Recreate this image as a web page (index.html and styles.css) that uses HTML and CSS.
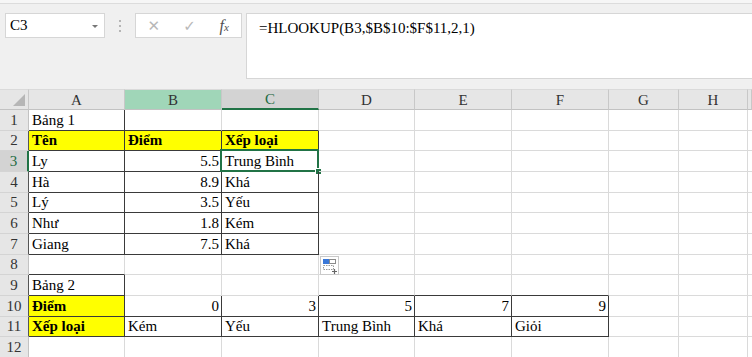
FILE: index.html
```html
<!DOCTYPE html>
<html lang="vi">
<head>
    <meta charset="UTF-8">
    <title>Bảng tính - HLOOKUP</title>
    <link rel="stylesheet" href="styles.css">
</head>
<body>
    <div class="top-strip"></div>

    <div class="formula-bar">
        <div class="name-box">
            <span>C3</span>
            <span class="drop"></span>
        </div>
        <div class="grip"><i></i><i></i><i></i></div>
        <div class="func-box">
            <span class="fx-btn cancel">✕</span>
            <span class="fx-btn ok">✓</span>
            <span class="fx-btn fx"><em>f</em><small>x</small></span>
        </div>
        <div class="formula">=HLOOKUP(B3,$B$10:$F$11,2,1)</div>
    </div>

    <div class="sheet">
        <!-- column headers -->
        <div class="hd corner"><span class="tri"></span></div>
        <div class="hd">A</div>
        <div class="hd col-b">B</div>
        <div class="hd col-sel">C</div>
        <div class="hd">D</div>
        <div class="hd">E</div>
        <div class="hd">F</div>
        <div class="hd">G</div>
        <div class="hd">H</div>
        <div class="hd"></div>

        <!-- 1 -->
        <div class="rh">1</div>
        <div class="c br bb">Bảng 1</div>
        <div class="c bb"></div>
        <div class="c bb"></div>
        <div class="c"></div><div class="c"></div><div class="c"></div><div class="c"></div><div class="c"></div><div class="c pad"></div>

        <!-- 2 -->
        <div class="rh dk">2</div>
        <div class="c br bb hl b">Tên</div>
        <div class="c br bb hl b">Điểm</div>
        <div class="c br bb hl b">Xếp loại</div>
        <div class="c"></div><div class="c"></div><div class="c"></div><div class="c"></div><div class="c"></div><div class="c pad"></div>

        <!-- 3 -->
        <div class="rh row-sel">3</div>
        <div class="c br bb">Ly</div>
        <div class="c br bb num">5.5</div>
        <div class="c br bb active">Trung Bình<span class="sel"><span class="handle"></span></span></div>
        <div class="c"></div><div class="c"></div><div class="c"></div><div class="c"></div><div class="c"></div><div class="c pad"></div>

        <!-- 4 -->
        <div class="rh dk">4</div>
        <div class="c br bb">Hà</div>
        <div class="c br bb num">8.9</div>
        <div class="c br bb">Khá</div>
        <div class="c"></div><div class="c"></div><div class="c"></div><div class="c"></div><div class="c"></div><div class="c pad"></div>

        <!-- 5 -->
        <div class="rh dk">5</div>
        <div class="c br bb">Lý</div>
        <div class="c br bb num">3.5</div>
        <div class="c br bb">Yếu</div>
        <div class="c"></div><div class="c"></div><div class="c"></div><div class="c"></div><div class="c"></div><div class="c pad"></div>

        <!-- 6 -->
        <div class="rh dk">6</div>
        <div class="c br bb">Như</div>
        <div class="c br bb num">1.8</div>
        <div class="c br bb">Kém</div>
        <div class="c"></div><div class="c"></div><div class="c"></div><div class="c"></div><div class="c"></div><div class="c pad"></div>

        <!-- 7 -->
        <div class="rh dk">7</div>
        <div class="c br bb">Giang</div>
        <div class="c br bb num">7.5</div>
        <div class="c br bb">Khá</div>
        <div class="c"></div><div class="c"></div><div class="c"></div><div class="c"></div><div class="c"></div><div class="c pad"></div>

        <!-- 8 -->
        <div class="rh">8</div>
        <div class="c bb"></div>
        <div class="c"></div>
        <div class="c"></div>
        <div class="c">
            <span class="paste-opt">
                <svg width="17" height="17" viewBox="0 0 17 17">
                    <rect x="2.5" y="2.5" width="6" height="4" fill="#3a78d8" stroke="#3a78d8"/>
                    <rect x="8.5" y="2.5" width="6" height="4" fill="#fff" stroke="#8a8a8a"/>
                    <rect x="2.5" y="8.5" width="10" height="4" fill="none" stroke="#9a9a9a" stroke-dasharray="1.5 1"/>
                    <path d="M11 14.5h5M13.5 12v5" stroke="#666" stroke-width="1.2"/>
                </svg>
            </span>
        </div>
        <div class="c"></div><div class="c"></div><div class="c"></div><div class="c"></div><div class="c pad"></div>

        <!-- 9 -->
        <div class="rh dk">9</div>
        <div class="c br bb">Bảng 2</div>
        <div class="c"></div>
        <div class="c"></div>
        <div class="c bb"></div>
        <div class="c bb"></div>
        <div class="c bb"></div>
        <div class="c"></div><div class="c"></div><div class="c pad"></div>

        <!-- 10 -->
        <div class="rh dk">10</div>
        <div class="c br bb hl b">Điểm</div>
        <div class="c br bb num">0</div>
        <div class="c br bb num">3</div>
        <div class="c br bb num">5</div>
        <div class="c br bb num">7</div>
        <div class="c br bb num">9</div>
        <div class="c"></div><div class="c"></div><div class="c pad"></div>

        <!-- 11 -->
        <div class="rh dk">11</div>
        <div class="c br bb hl b">Xếp loại</div>
        <div class="c br bb">Kém</div>
        <div class="c br bb">Yếu</div>
        <div class="c br bb">Trung Bình</div>
        <div class="c br bb">Khá</div>
        <div class="c br bb">Giỏi</div>
        <div class="c"></div><div class="c"></div><div class="c pad"></div>

        <!-- 12 -->
        <div class="rh">12</div>
        <div class="c"></div><div class="c"></div><div class="c"></div><div class="c"></div><div class="c"></div><div class="c"></div><div class="c"></div><div class="c"></div><div class="c pad"></div>
    </div>
</body>
</html>
```

FILE: styles.css
```css
html, body {
    margin: 0;
    overflow: hidden;
}
body {
    font-family: 'Liberation Serif', 'Times New Roman', serif;
    font-size: 15px;
    color: #000;
    background: #f0f0f0;
    width: 752px;
    height: 357px;
}

/* formula bar */
.top-strip {
    height: 3px;
    background: #f6f6f6;
    border-bottom: 1px solid #dcdcdc;
}
.formula-bar {
    display: flex;
    align-items: flex-start;
    height: 85px;
    padding: 9px 0 0 5px;
    box-sizing: border-box;
    background: #f0f0f0;
}
.name-box {
    width: 100px;
    height: 25px;
    box-sizing: border-box;
    background: #fff;
    border: 1px solid #d6d6d6;
    display: flex;
    align-items: center;
    justify-content: space-between;
    padding: 0 6px 0 4px;
}
.drop {
    width: 0;
    height: 0;
    border-left: 3px solid transparent;
    border-right: 3px solid transparent;
    border-top: 3px solid #777;
    margin-top: 2px;
}
.grip {
    width: 30px;
    height: 25px;
    display: flex;
    flex-direction: column;
    align-items: center;
    justify-content: center;
    gap: 3px;
}
.grip i {
    width: 2px;
    height: 2px;
    background: #b5b5b5;
}
.func-box {
    width: 107px;
    height: 25px;
    box-sizing: border-box;
    background: #fff;
    border: 1px solid #d6d6d6;
    display: flex;
    align-items: center;
}
.fx-btn {
    width: 36px;
    text-align: center;
    color: #b8b8b8;
    font-family: 'DejaVu Sans', sans-serif;
    font-size: 15px;
}
.fx-btn.fx {
    font-family: 'Liberation Serif', serif;
    color: #505050;
    font-size: 16px;
    width: 34px;
}
.fx-btn.fx small {
    font-size: 11px;
    font-style: italic;
}
.formula {
    flex: 1;
    height: 66px;
    margin-left: 4px;
    box-sizing: border-box;
    background: #fff;
    border: 1px solid #d6d6d6;
    border-right: none;
    padding: 6px 0 0 12px;
}

/* grid */
.sheet {
    display: grid;
    grid-template-columns: 29px 96px 97px 97px 96px 97px 97px 70px 69px 4px;
    grid-template-rows: 21px repeat(12, 20.67px);
    background: #fff;
}
.hd {
    background: #e6e6e6;
    color: #333;
    border-right: 1px solid #c8c8c8;
    border-bottom: 1px solid #c2c2c2;
    border-top: 1px solid #dadada;
    box-sizing: border-box;
    display: flex;
    align-items: center;
    justify-content: center;
    padding-top: 1px;
}
.hd.corner {
    position: relative;
}
.tri {
    position: absolute;
    right: 3px;
    bottom: 3px;
    width: 0;
    height: 0;
    border-left: 12px solid transparent;
    border-bottom: 12px solid #b6b6b6;
}
.hd.col-b {
    background: #a0d6b8;
}
.hd.col-sel {
    background: #d3d3d3;
    color: #1f6b43;
    border-bottom: 2px solid #217346;
}
.rh {
    background: #e6e6e6;
    color: #333;
    border-right: 1px solid #c2c2c2;
    border-bottom: 1px solid #d4d4d4;
    box-sizing: border-box;
    display: flex;
    align-items: center;
    justify-content: center;
    padding-top: 1px;
}
.rh.dk {
    border-right-color: #555;
}
.rh.row-sel {
    background: #d3d3d3;
    color: #1f6b43;
    border-right: 2px solid #217346;
}

.c {
    position: relative;
    box-sizing: border-box;
    border-right: 1px solid #dadada;
    border-bottom: 1px solid #dadada;
    padding: 1px 2px 0 3px;
    display: flex;
    align-items: center;
    white-space: nowrap;
}
.c.br {
    border-right-color: #3a3a3a;
}
.c.bb {
    border-bottom-color: #3a3a3a;
}
.c.hl {
    background: #ffff00;
}
.c.b {
    font-weight: bold;
}
.c.num {
    justify-content: flex-end;
}

/* active cell */
.sel {
    position: absolute;
    left: -2px;
    top: -2px;
    right: -1px;
    bottom: -1px;
    border: 2px solid #217346;
}
.handle {
    position: absolute;
    right: -5px;
    bottom: -5px;
    width: 5px;
    height: 5px;
    background: #217346;
    border: 1px solid #fff;
}

/* paste options button */
.paste-opt {
    position: absolute;
    left: 1px;
    top: 1px;
    width: 19px;
    height: 19px;
    box-sizing: border-box;
    background: #fff;
    border: 1px solid #c9c9c9;
    display: flex;
    align-items: center;
    justify-content: center;
}
```
